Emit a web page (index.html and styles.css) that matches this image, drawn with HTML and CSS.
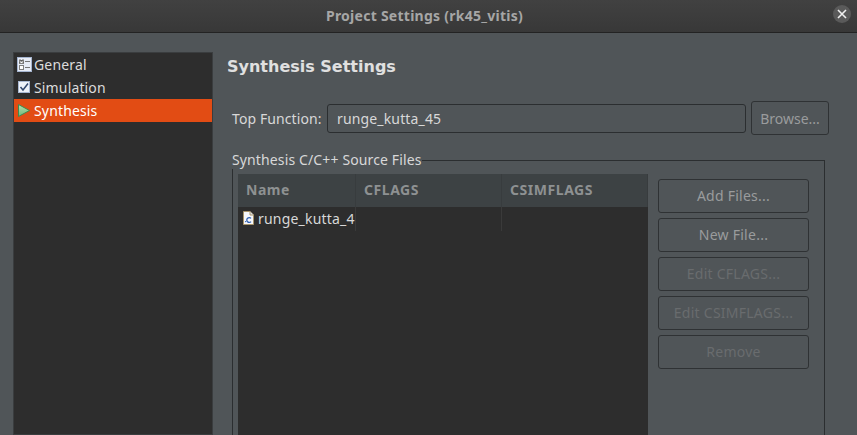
FILE: index.html
```html
<!DOCTYPE html>
<html lang="en">
<head>
<meta charset="utf-8">
<title>Project Settings (rk45_vitis)</title>
<link rel="stylesheet" href="styles.css">
</head>
<body>
<div class="window">
  <header class="titlebar">
    <div class="title">Project Settings (rk45_vitis)</div>
    <div class="close">
      <svg width="10" height="10" viewBox="0 0 10 10"><path d="M1 1L9 9M9 1L1 9" stroke="#f0f0f0" stroke-width="1.6" fill="none"/></svg>
    </div>
  </header>
  <div class="content">
    <nav class="sidebar">
      <div class="nav-item">
        <svg class="nav-icon" width="16" height="16" viewBox="0 0 16 16">
          <rect x="0.5" y="0.5" width="14" height="14" fill="#e8edf7" stroke="#a5b5d0"/>
          <rect x="2.5" y="3.5" width="4" height="3" fill="#fff" stroke="#808080"/>
          <path d="M2.5 2L6.5 6M6.5 2L2.5 6" stroke="#444" stroke-width="0.7"/>
          <rect x="2.5" y="8.5" width="4" height="4" fill="#fff" stroke="#808080"/>
          <path d="M8 4.5H13M8 10.5H13" stroke="#777"/>
        </svg>
        <span>General</span>
      </div>
      <div class="nav-item">
        <svg class="nav-icon" width="16" height="16" viewBox="0 0 16 16">
          <rect x="1.5" y="1.5" width="11" height="11" fill="#eef2f9" stroke="#a9b8d2"/>
          <path d="M3.5 7L6 10L11 3.5" stroke="#33486e" stroke-width="1.5" fill="none"/>
        </svg>
        <span>Simulation</span>
      </div>
      <div class="nav-item selected">
        <svg class="nav-icon" width="16" height="16" viewBox="0 0 16 16">
          <defs>
            <linearGradient id="runFill" x1="0" y1="0" x2="0" y2="1">
              <stop offset="0" stop-color="#b4dfae"/>
              <stop offset="1" stop-color="#6fb877"/>
            </linearGradient>
          </defs>
          <path d="M1.5 1.5L12.5 7.5L1.5 13.5Z" fill="url(#runFill)" stroke="#3c8a50"/>
        </svg>
        <span>Synthesis</span>
      </div>
    </nav>
    <main class="panel">
      <h1 class="heading">Synthesis Settings</h1>
      <div class="top-row">
        <label class="top-label">Top Function:</label>
        <div class="text-input">runge_kutta_45</div>
        <button class="btn btn-browse">Browse...</button>
      </div>
      <fieldset class="group">
        <legend class="group-title">Synthesis C/C++ Source Files</legend>
        <div class="group-body">
          <div class="table">
            <div class="thead">
              <div class="col col-name">Name</div>
              <div class="col col-cflags">CFLAGS</div>
              <div class="col col-csim">CSIMFLAGS</div>
            </div>
            <div class="tr">
              <div class="cell col-name">
                <svg class="file-icon" width="13" height="16" viewBox="0 0 13 16">
                  <path d="M1.5 1.5H8L11.5 5V14.5H1.5Z" fill="#f5f7fb" stroke="#a8946a"/>
                  <path d="M8 1.5V5H11.5" fill="#dfe4ee" stroke="#a8946a"/>
                  <circle cx="3.6" cy="11.6" r="0.7" fill="#2f5fb0"/>
                  <path d="M9 8.4A2.4 2.4 0 1 0 9 11.6" fill="none" stroke="#2f5fb0" stroke-width="1.3"/>
                </svg>
                <span class="file-name">runge_kutta_4</span>
              </div>
              <div class="cell col-cflags"></div>
              <div class="cell col-csim"></div>
            </div>
          </div>
          <div class="actions">
            <button class="btn">Add Files...</button>
            <button class="btn">New File...</button>
            <button class="btn off">Edit CFLAGS...</button>
            <button class="btn off">Edit CSIMFLAGS...</button>
            <button class="btn off">Remove</button>
          </div>
        </div>
      </fieldset>
    </main>
  </div>
</div>
</body>
</html>
```
FILE: styles.css
```css
* { box-sizing: border-box; }
html, body { margin: 0; height: 100%; overflow: hidden; }
body { font-family: "Noto Sans", "DejaVu Sans", sans-serif; font-size: 14px; letter-spacing: 0.15px; color: #d8d8d8; background: #505558; }
.window { width: 857px; height: 435px; display: flex; flex-direction: column; overflow: hidden; }
.titlebar { height: 33px; flex: none; display: flex; align-items: center; justify-content: center; position: relative; padding: 0 8px 2px 0; background: linear-gradient(#414141, #383838); border-bottom: 1px solid #232323; }
.title { font-weight: 700; font-size: 14px; letter-spacing: 0.26px; color: #a6a6a6; }
.close { position: absolute; right: 6px; top: 5px; width: 18px; height: 18px; border-radius: 50%; background: #5a5a5a; display: flex; align-items: center; justify-content: center; }
.content { flex: 1; display: flex; padding: 19px 0 0 13px; min-height: 0; }
.sidebar { width: 200px; flex: none; background: #2d2d2d; border: 1px solid #3a3d3f; padding-top: 0; }
.nav-item { height: 23px; display: flex; align-items: center; color: #dcdcdc; padding-left: 3px; }
.nav-item.selected { background: #e24c14; color: #fff; }
.nav-icon { flex: none; margin-right: 1px; }
.panel { flex: 1; padding-left: 14px; min-width: 0; }
.heading { margin: 0; font-family: "DejaVu Sans", sans-serif; font-size: 16px; font-weight: 700; letter-spacing: 0; height: 29px; line-height: 29px; color: #e0e0e0; }
.top-row { display: flex; align-items: center; margin-top: 20px; padding-left: 5px; width: 602px; }
.top-label { width: 95px; flex: none; color: #d8d8d8; letter-spacing: 0.1px; }
.text-input { width: 419px; height: 29px; flex: none; line-height: 27px; padding-left: 9px; border: 1px solid #2b2e30; border-radius: 3px; color: #d8d8d8; background: #505558; }
.btn { font: inherit; font-size: 14px; letter-spacing: 0.25px; color: #9a9c9d; background: #505558; border: 1px solid #2f3234; border-radius: 3px; height: 34px; padding: 0; }
.btn-browse { width: 78px; margin-left: 5px; flex: none; letter-spacing: 0; }
.group { margin: 16px 0 0 5px; padding: 0 0 0 5px; width: 593px; height: 300px; border: 1px solid #2b2e30; border-bottom: 0; min-width: 0; }
.group-title { padding: 0; margin-left: -6px; color: #d8d8d8; line-height: 18px; letter-spacing: 0.13px; }
.group-body { display: flex; gap: 10px; padding-top: 5px; }
.table { width: 410px; height: 280px; flex: none; background: #2d2d2d; }
.thead { height: 33px; display: flex; background: #3d4244; font-weight: 700; color: #8e9192; letter-spacing: 0.55px; }
.thead .col { line-height: 31px; padding-left: 8px; border-right: 1px solid #383c3e; }
.col-name { width: 118px; flex: none; }
.col-cflags { width: 146px; flex: none; }
.col-csim { flex: 1; }
.tr { display: flex; height: 24px; }
.cell { border-right: 1px solid #3a3a3a; display: flex; align-items: center; }
.col-csim.cell { border-right: 0; }
.cell.col-name { padding: 0 0 2px 4px; overflow: hidden; white-space: nowrap; }
.file-icon { flex: none; margin-right: 3px; }
.file-name { color: #d8d8d8; letter-spacing: 0.2px; }
.actions { display: flex; flex-direction: column; gap: 5px; width: 151px; flex: none; padding-top: 5px; }
.actions .btn { width: 100%; padding-bottom: 2px; }
.btn.off { color: #696c6e; }
```
